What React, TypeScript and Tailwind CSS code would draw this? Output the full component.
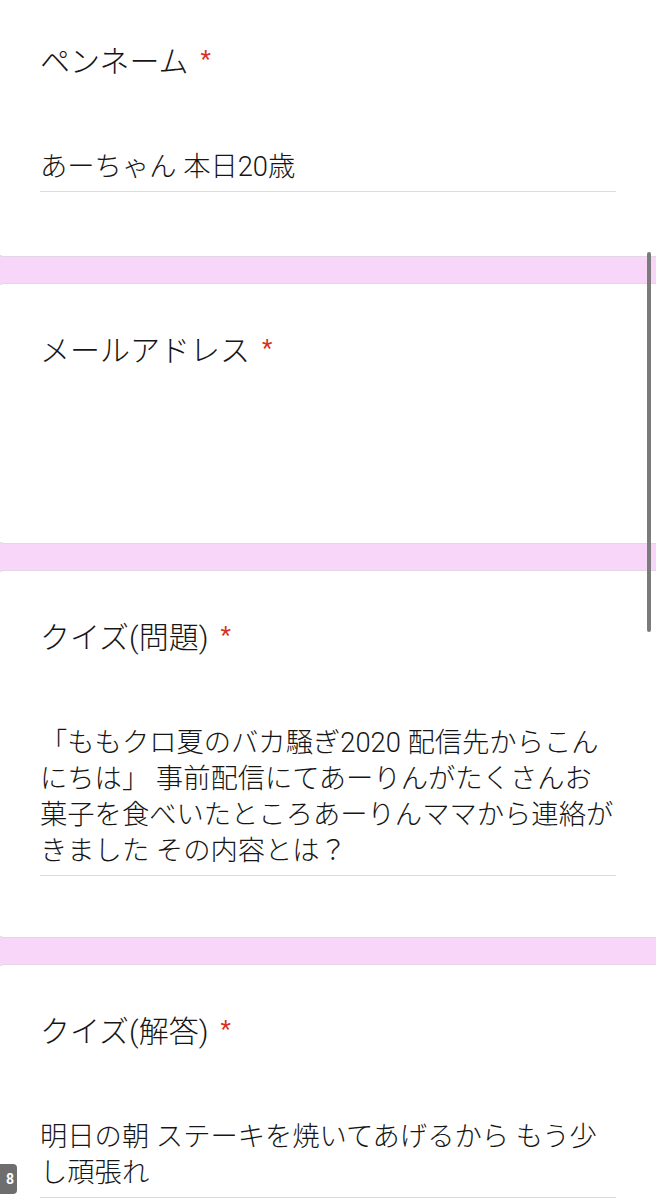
import React from 'react';

type Question = {
    label: string;
    lines: string[];
    first?: boolean;
};

const questions: Question[] = [
    { label: 'ペンネーム', lines: ['あーちゃん 本日20歳'], first: true },
    { label: 'メールアドレス', lines: [''] },
    {
        label: 'クイズ(問題)',
        lines: [
            '「ももクロ夏のバカ騒ぎ2020 配信先からこん',
            'にちは」 事前配信にてあーりんがたくさんお',
            '菓子を食べいたところあーりんママから連絡が',
            'きました その内容とは？',
        ],
    },
    {
        label: 'クイズ(解答)',
        lines: ['明日の朝 ステーキを焼いてあげるから もう少', 'し頑張れ'],
    },
];

const QuestionCard: React.FC<{ q: Question; hideLine?: boolean }> = ({ q, hideLine }) => (
    <div
        className={`-ml-[4px] -mr-[12px] bg-white rounded-lg border border-[#e3d6e5] pl-[43px] pr-[51px] ${hideLine ? 'pb-[62px]' : 'pb-[61px]'} ${q.first ? 'pt-[42px] rounded-t-none border-t-0 pb-[64px]' : 'pt-[47px]'}`}
    >
        <div className="text-[30px] leading-[40px] text-[#161616] font-light">
            {q.label}
            <span className="ml-[12px] align-top text-[24px] leading-[34px] text-[#d93025] font-normal">*</span>
        </div>
        <div className="mt-[67px] text-[27.3px] leading-[36px] text-[#161616] font-light">
            {q.lines.map((l, i) => (
                <div key={i} className="whitespace-nowrap min-h-[36px]">{l}</div>
            ))}
        </div>
        <div className={`mt-[6px] h-px ${hideLine ? 'bg-white' : 'bg-[#dcdcdc]'}`} />
    </div>
);

export default function App() {
    return (
        <div
            className="relative w-[656px] h-[1200px] overflow-hidden bg-[#f8d6fa]"
            style={{ fontFamily: 'Roboto, "Noto Sans CJK JP", sans-serif' }}
        >
            <div className="flex flex-col gap-[26px]">
                {questions.map((q, i) => (
                    <QuestionCard key={i} q={q} hideLine={i === 1} />
                ))}
            </div>

            {/* scrollbar */}
            <div className="absolute left-[647px] top-[252px] w-[4px] h-[380px] rounded-full bg-[#7b7b7b]" />

            {/* little overlay chip at the bottom left */}
            <div className="absolute -left-[4px] top-[1164px] w-[21px] h-[30px] rounded-[4px] bg-[#6e6e6e] flex items-center justify-end pr-[3px]">
                <span className="text-white text-[14px] leading-none font-bold">8</span>
            </div>
        </div>
    );
}
